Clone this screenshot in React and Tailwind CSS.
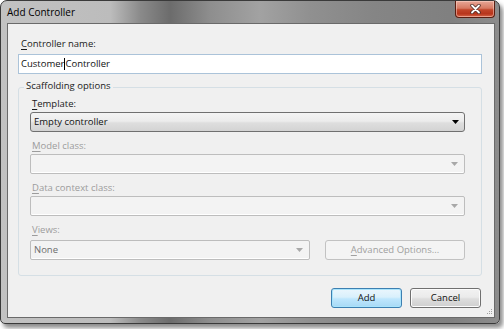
import React from 'react';

const Arrow = ({ color = '#000' }) => (
  <svg width="7" height="4" viewBox="0 0 7 4" className="shrink-0">
    <path d="M0 0 H7 L3.5 4 Z" fill={color} />
  </svg>
);

const Label = ({ u, rest, disabled, className = '' }) => (
  <div className={`h-[17px] leading-[17px] pl-[2px] ${disabled ? 'text-[#9c9c9c]' : 'text-[#1a1a1a]'} ${className}`}>
    <span className="underline underline-offset-[2px]">{u}</span>
    {rest}
  </div>
);

const DisabledCombo = ({ children, className = '' }) => (
  <div className={`h-[20px] flex items-center justify-between rounded-[2px] border border-[#bdbdbd] bg-[#f3f3f3] shadow-[inset_0_-1px_0_#ffffff] pl-[3px] pr-[6px] ${className}`}>
    <span className="text-[#6d6d6d]">{children}</span>
    <Arrow color="#a8a8a8" />
  </div>
);

const CloseButton = () => (
  <div className="w-[40px] h-[17px] flex items-center justify-center rounded-b-[4px] border border-t-0 border-[#5a1e12] bg-[linear-gradient(180deg,#e8a797_0%,#d77a63_45%,#c2452a_55%,#b7351c_80%,#d8674a_100%)] shadow-[inset_0_0_0_1px_rgba(255,220,210,0.5)]">
    <svg width="11" height="10" viewBox="0 0 11 10">
      <path d="M2 1.5 L9 8.5 M9 1.5 L2 8.5" stroke="#4a2a24" strokeWidth="3.4" strokeLinecap="round" />
      <path d="M2 1.5 L9 8.5 M9 1.5 L2 8.5" stroke="#ffffff" strokeWidth="1.8" strokeLinecap="round" />
    </svg>
  </div>
);

const Grip = () => (
  <div className="absolute right-[2px] bottom-[3px] grid grid-cols-3 gap-[1px]">
    {[0, 0, 1, 0, 1, 1, 1, 1, 1].map((on, i) => (
      <div key={i} className={`w-[1px] h-[1px] ${on ? 'bg-[#a0a0a0]' : 'bg-transparent'}`} />
    ))}
  </div>
);

export default function App() {
  return (
    <div className="w-[504px] h-[329px] bg-white font-['Open_Sans',sans-serif] text-[9.5px] text-black">
      <div className="w-[500px] h-[324px] flex flex-col rounded-t-[7px] rounded-b-[5px] border border-[#3a3a3a] bg-[linear-gradient(90deg,#c2c2c2_0%,#bcbcbc_22%,#8a8a8a_28%,#6c6c6c_34%,#8e8e8e_42%,#a2a2a2_52%,#909090_62%,#858585_75%,#808080_90%,#8c8c8c_100%)] shadow-[3px_4px_4px_rgba(0,0,0,0.45)] pl-[6px] pr-[4px] pb-[5px]">
        {/* title bar */}
        <div className="h-[22px] flex items-start justify-between">
          <span className="pt-[4px] leading-[14px] text-[10px] text-black">Add Controller</span>
          <CloseButton />
        </div>

        {/* client area */}
        <div className="relative flex-1 flex flex-col border border-[#6a6a6a] bg-[#f0f0f0] pt-[11px] pl-[10px] pr-[12px]">
          <div className="h-[17px] leading-[17px] pl-[3px] text-[#1a1a1a]">
            <span className="underline underline-offset-[2px]">C</span>ontroller name:
          </div>
          <div className="mt-[2px] h-[20px] flex items-center border border-[#abc3d9] bg-white pl-[2px] text-[#111]">
            Customer
            <span className="inline-block w-px h-[12px] bg-black" />
            Controller
          </div>

          {/* scaffolding options */}
          <div className="relative mt-[13px] h-[189px] flex flex-col rounded-[3px] border border-[#d5dfe5] pt-[7px] pl-[11px] pr-[16px]">
            <div className="absolute left-[5px] top-[-9px] h-[14px] leading-[14px] px-[2px] bg-[#f0f0f0] text-[#1a1a1a]">
              Scaffolding options
            </div>

            <Label u="T" rest="emplate:" />
            <div className="h-[20px] flex items-center justify-between rounded-[3px] border border-[#707070] bg-[linear-gradient(180deg,#f4f4f4_0%,#ececec_45%,#dedede_55%,#d3d3d3_100%)] pl-[3px] pr-[5px] text-[#111]">
              <span>Empty controller</span>
              <Arrow />
            </div>

            <Label u="M" rest="odel class:" disabled className="mt-[5px]" />
            <DisabledCombo />

            <Label u="D" rest="ata context class:" disabled className="mt-[5px]" />
            <DisabledCombo />

            <Label u="V" rest="iews:" disabled className="mt-[5px] mb-[2px]" />
            <div className="flex gap-[15px]">
              <DisabledCombo className="w-[280px]">None</DisabledCombo>
              <div className="flex-1 h-[20px] flex items-center justify-center rounded-[3px] border border-[#c2c2c2] bg-[#f4f4f4] text-[#a0a0a0]">
                <span>
                  <span className="underline underline-offset-[2px]">A</span>dvanced Options...
                </span>
              </div>
            </div>
          </div>

          {/* buttons */}
          <div className="mt-[12px] flex justify-end gap-[8px] pr-[1px]">
            <div className="w-[71px] h-[20px] flex items-center justify-center rounded-[3px] border border-[#3c7fb1] bg-[linear-gradient(180deg,#eaf6fd_0%,#d9f0fc_45%,#bee6fd_55%,#a7d9f5_100%)] shadow-[inset_0_0_0_1px_#a9e4fc] text-[#111]">
              Add
            </div>
            <div className="w-[71px] h-[20px] flex items-center justify-center rounded-[3px] border border-[#707070] bg-[linear-gradient(180deg,#f2f2f2_0%,#ebebeb_45%,#dddddd_55%,#cfcfcf_100%)] shadow-[inset_0_0_0_1px_#fcfcfc] text-[#111]">
              Cancel
            </div>
          </div>

          <Grip />
        </div>
      </div>
    </div>
  );
}
